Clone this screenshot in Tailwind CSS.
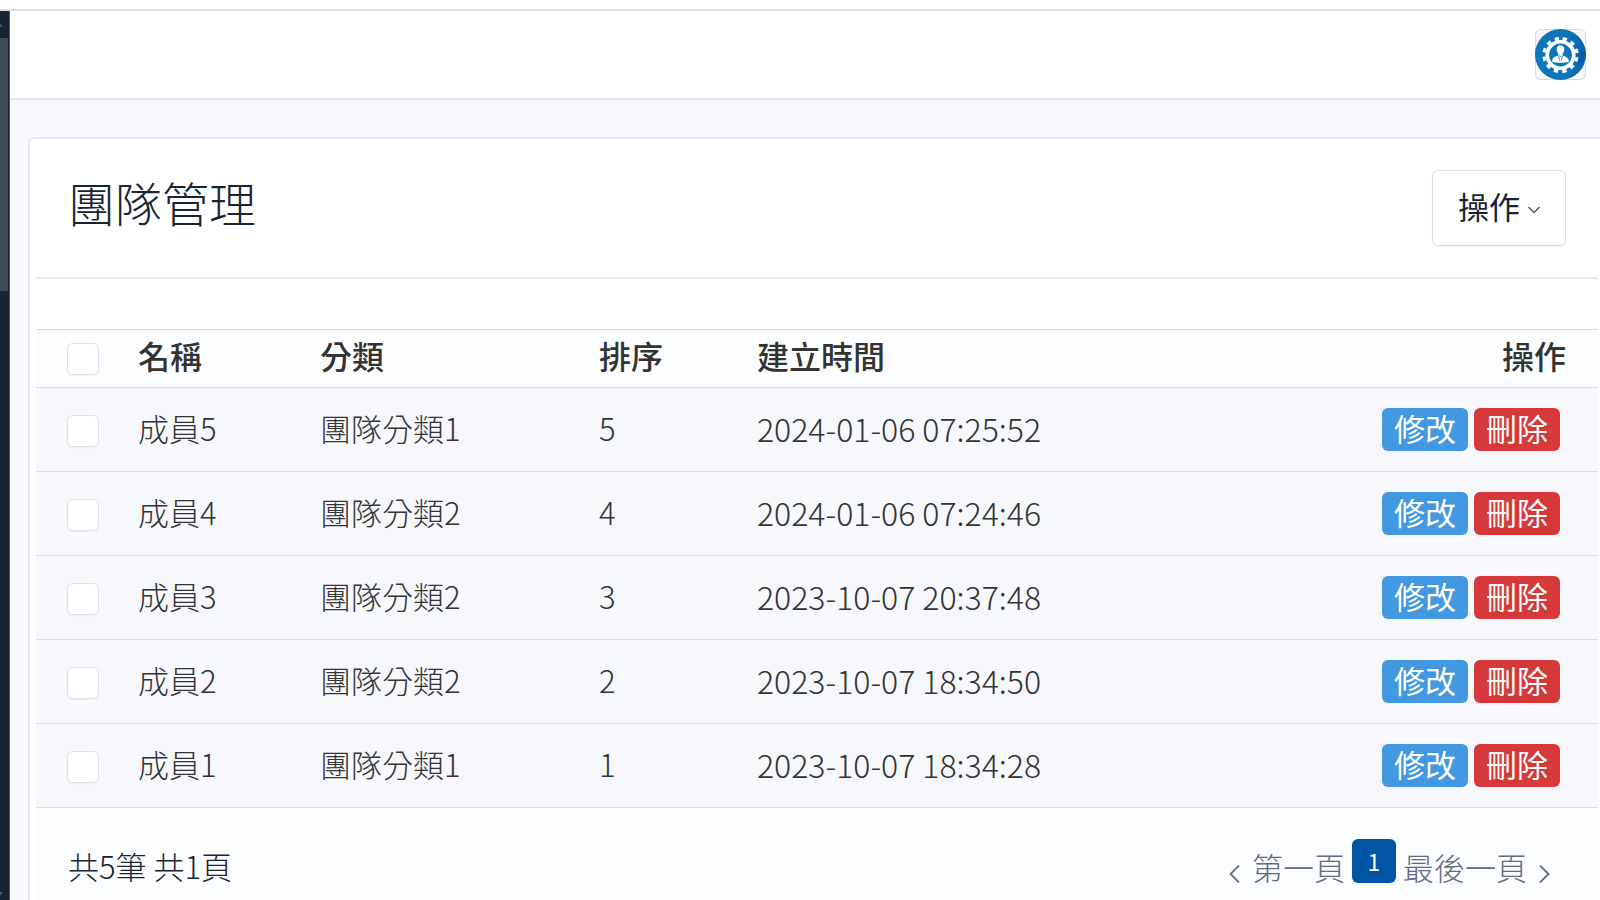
<!DOCTYPE html>
<html lang="zh-Hant">
<head>
<meta charset="utf-8">
<title>團隊管理</title>
<script src="https://cdn.jsdelivr.net/npm/@tailwindcss/browser@4"></script>
</head>
<body class="flex h-screen flex-col overflow-hidden bg-white font-['Noto_Sans_CJK_TC',sans-serif] text-[31px] leading-10 font-light text-[#182433]">
<div class="h-[11px] shrink-0 border-b-2 border-[#dcdcdc] bg-white"></div>
<div class="flex min-h-0 flex-1">
  <aside class="flex w-[10px] shrink-0 flex-col border-r border-[#4a5568] bg-[#182433]" aria-label="側邊欄">
    <div class="flex h-[27px] items-center">
      <svg class="h-1 w-[3px]" viewBox="0 0 3 4"><path d="M0 0l3 4H0z" fill="#4a5560"/></svg>
    </div>
    <div class="mr-px h-[253px] bg-[#414b57]"></div>
    <svg class="mt-auto mb-1 h-1 w-[3px]" viewBox="0 0 3 4"><path d="M0 4l3-4H0z" fill="#4a5560"/></svg>
  </aside>
  <div class="flex min-w-0 flex-1 flex-col bg-[#f6f8fc]">
    <header class="flex h-[89px] shrink-0 items-center justify-end border-b-2 border-[#e0e4ec] bg-white pr-[14px]">
      <button type="button" aria-label="帳號" class="size-[51px] rounded-md bg-[#f6f8fc] ring-1 ring-[#d5dbe4] ring-inset">
        <svg class="size-full" viewBox="0 0 50 50">
          <defs><linearGradient id="disc" x1="0" y1="0" x2="1" y2="0"><stop offset=".6" stop-color="#0d76bb"/><stop offset="1" stop-color="#0860ac"/></linearGradient></defs>
          <circle cx="25" cy="25" r="25" fill="url(#disc)"/>
          <path d="M43 27 49.500 22v7l-8 7z" fill="#0750a0" opacity=".6"/>
          <circle cx="25" cy="25.500" r="13" fill="none" stroke="#fff" stroke-width="3.600"/>
          <circle cx="25" cy="25.500" r="15.900" fill="none" stroke="#fff" stroke-width="3.800" stroke-dasharray="4.160 4.165" transform="rotate(-82.500 25 25.500)"/>
          <path d="M25 16c2.300 0 3.700 1.600 3.700 4 0 1.900-.9 3.300-1.700 4.200v2h-4v-2c-.8-.9-1.700-2.300-1.700-4.200 0-2.400 1.400-4 3.700-4z" fill="#fff"/>
          <path d="M16.800 32c0-3.500 2-4.800 6.200-6l2 1.500 2-1.500c4.200 1.200 6.200 2.500 6.200 6-4.200 1.500-12.200 1.500-16.400 0z" fill="#fff"/>
          <path d="M23 26.500l1.300 4.500M27 26.500l-1.300 4.500" stroke="#0d76bb" stroke-width=".8"/>
        </svg>
      </button>
    </header>
    <main class="min-h-0 flex-1 pt-[37px] pl-[18px]">
      <section class="h-full overflow-hidden rounded-tl-md border-t-2 border-l-2 border-[#e4e7ed] bg-white pr-[2px] pl-[6px]">
        <div class="flex items-start justify-between border-b-2 border-[#e6e9ee] px-8 pt-[31px] pb-[31px]">
          <h1 class="text-[47px] leading-[64px] font-light">團隊管理</h1>
          <button type="button" class="flex h-[76px] items-center gap-2 rounded-md border border-[#dadfe5] bg-white px-[25px] pb-1 font-normal shadow-xs">操作
            <svg class="mt-2 h-2 w-3" viewBox="0 0 12 8" fill="none" stroke="#4f5a68" stroke-width="1.500"><path d="M.5 1 6 6.500 11.500 1"/></svg>
          </button>
        </div>
        <table class="mt-[50px] w-full table-fixed border-collapse text-left text-[#333]">
          <thead>
            <tr class="h-[58px] border-y border-[#d9dde4] bg-[#fcfdfe] text-[32px]">
              <th class="w-[102px] pl-[31px]"><input type="checkbox" aria-label="全選" class="block size-8 appearance-none rounded-md border border-[#dfe2e8] bg-white shadow-xs"></th>
              <th class="w-[182px] pb-2 font-medium">名稱</th>
              <th class="w-[279px] pb-2 font-medium">分類</th>
              <th class="w-[158px] pb-2 font-medium">排序</th>
              <th class="pb-2 font-medium">建立時間</th>
              <th class="w-[260px] pr-8 pb-2 text-right font-medium">操作</th>
            </tr>
          </thead>
          <tbody id="rows"></tbody>
        </table>
        <footer class="flex items-start justify-between bg-[#fcfdfe] pr-12 pb-8 pl-8">
          <p class="pt-[38px]">共5筆 共1頁</p>
          <nav class="flex items-start pt-[31px] text-[#616e7f]" aria-label="分頁">
            <a href="#" class="flex items-start gap-3 pt-2">
              <svg class="mt-[18px] h-[18px] w-[11px]" viewBox="0 0 11 18" fill="none" stroke="currentColor" stroke-width="1.800"><path d="M10 .5 1.500 9 10 17.500"/></svg>第一頁</a>
            <a href="#" aria-current="page" class="mx-[7px] flex size-11 items-center justify-center rounded-md bg-[#0054a6] text-[23px] leading-8 font-normal text-white">1</a>
            <a href="#" class="flex items-start gap-3 pt-2">最後一頁<svg class="mt-[18px] h-[18px] w-[11px]" viewBox="0 0 11 18" fill="none" stroke="currentColor" stroke-width="1.800"><path d="M1 .5 9.500 9 1 17.500"/></svg></a>
          </nav>
        </footer>
      </section>
    </main>
  </div>
</div>
<template id="row">
  <tr class="h-[84px] border-b border-[#d9dde4] bg-[#f6f8fc]">
    <td class="pt-[2px] pl-[31px]"><input type="checkbox" class="block size-8 appearance-none rounded-md border border-[#dfe2e8] bg-white shadow-xs"></td>
    <td class="pb-[3px]"></td><td class="pb-[3px]"></td><td class="pb-[3px]"></td><td class="pb-[3px] text-[32px]"></td>
    <td class="pr-[38px]">
      <div class="flex justify-end gap-[6px] font-normal text-white">
        <button type="button" class="flex h-[43px] rounded-md bg-[#4299e1] px-3">修改</button>
        <button type="button" class="flex h-[43px] rounded-md bg-[#d63939] px-3">刪除</button>
      </div>
    </td>
  </tr>
</template>
<script>
const members = [
  ['成員5', '團隊分類1', '5', '2024-01-06 07:25:52'],
  ['成員4', '團隊分類2', '4', '2024-01-06 07:24:46'],
  ['成員3', '團隊分類2', '3', '2023-10-07 20:37:48'],
  ['成員2', '團隊分類2', '2', '2023-10-07 18:34:50'],
  ['成員1', '團隊分類1', '1', '2023-10-07 18:34:28'],
];
for (const member of members) {
  const row = document.getElementById('row').content.cloneNode(true);
  const cells = row.querySelectorAll('td');
  row.querySelector('input').setAttribute('aria-label', member[0]);
  member.forEach((text, i) => { cells[i + 1].textContent = text; });
  document.getElementById('rows').append(row);
}
</script>
</body>
</html>
